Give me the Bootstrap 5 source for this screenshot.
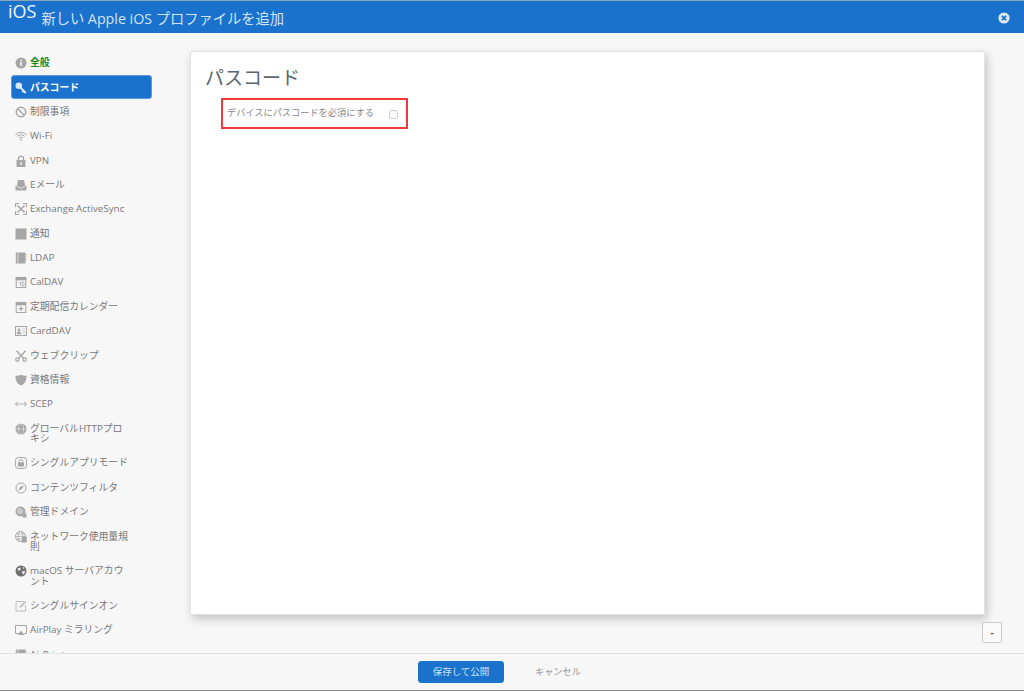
<!DOCTYPE html>
<html lang="ja">
<head>
  <meta charset="UTF-8">
  <meta name="viewport" content="width=device-width, initial-scale=1.0">
  <title>新しい Apple iOS プロファイルを追加</title>
  <link href="https://cdn.jsdelivr.net/npm/bootstrap@5.3.3/dist/css/bootstrap.min.css" rel="stylesheet">
  <style>
    html, body { height: 100%; overflow: hidden; }
    body {
      background: #f7f7f7;
      font-family: "Open Sans", "Noto Sans CJK JP", sans-serif;
      color: #666;
    }
    .page-shell { height: 691px; border-bottom: 1px solid #888; }
    .top-bar {
      height: 33px;
      background: #1b72cc;
      border-top: 1px solid #8fa3b8;
      color: #d3e3f5;
      padding-left: 8px;
      padding-right: 14px;
    }
    .os-name { font-size: 18px; font-weight: 400; line-height: 24px; color: #eef4fb; margin-top: -2px; }
    .sheet-title { font-size: 14.25px; font-weight: 400; line-height: 20px; margin: 8px 0 0 5px; }
    .middle { min-height: 0; }
    .side-col { width: 190px; padding: 18px 0 0 11px; overflow: hidden; }
    .side-item {
      width: 141px;
      padding: 7px 20px 7px 4px;
      font-size: 9.8px;
      line-height: 10.38px;
      color: #777;
      border-radius: 3px;
      gap: 3px;
    }
    .side-item svg { width: 12px; height: 12px; flex: none; margin: -1px 0 -2px; color: #a6a6a6; }
    .side-item.is-ok { color: #1c8a1c; font-weight: 600; }
    .side-item.is-active {
      background: #1b72cc;
      color: #fff;
      font-weight: 600;
      border: 1px solid #5b9ade;
      margin-bottom: 1px;
      padding: 7px 19px 4px 3px;
    }
    .side-item.is-active svg { color: #dbe8f7; }
    .main-col { min-width: 0; padding: 18px 21px 0 0; }
    .sheet-card {
      width: 795px;
      height: 564px;
      background: #fff;
      border: 1px solid #e3e3e3;
      border-radius: 2px;
      box-shadow: 2px 4px 10px rgba(0, 0, 0, .22);
      padding: 13px 14px;
    }
    .sheet-card h1 { font-size: 19px; font-weight: 400; line-height: 27px; color: #5a6570; margin: 0 0 6px; }
    .highlight-box {
      width: 187px;
      height: 31px;
      margin-left: 16px;
      border: 2px solid #f2383a;
      padding: 0 8px 2px 4px;
      font-size: 9.2px;
      color: #888;
    }
    .fake-check {
      width: 9px;
      height: 9px;
      border: 1px solid #d0d0d0;
      border-radius: 2px;
      background: #fafafa;
      margin-top: 3px;
    }
    .mini-btn {
      width: 20px;
      height: 21px;
      margin: 7px 0 0 792px;
      padding: 0;
      font-size: 10px;
      line-height: 17px;
      font-weight: 700;
      color: #555;
      background: #fafafa;
      border: 1px solid #ccc;
      border-radius: 2px;
    }
    .bottom-bar { height: 37px; border-top: 1px solid #e2e2e2; padding: 7px 0 0 418px; gap: 31px; }
    .save-btn {
      width: 86px;
      height: 22px;
      padding: 0;
      font-size: 9.5px;
      line-height: 20px;
      color: #d3e3f5;
      background: #1b72cc;
      border: 1px solid #1b72cc;
      border-radius: 3px;
    }
    .cancel-link { font-size: 9.2px; line-height: 22px; color: #949494; }
    .close-dot { width: 12px; height: 12px; color: #dbe8f8; margin-top: 11px; }
  </style>
</head>
<body>
  <svg width="0" height="0" class="d-block">
    <symbol id="i-info" viewBox="0 0 12 12"><circle cx="6" cy="6" r="5.5" fill="currentColor"/><rect x="5.2" y="5" width="1.6" height="4" fill="#f7f7f7"/><rect x="5.2" y="2.8" width="1.6" height="1.4" fill="#f7f7f7"/></symbol>
    <symbol id="i-key" viewBox="0 0 12 12"><circle cx="3.8" cy="3.8" r="3.3" fill="currentColor"/><path d="M5.5 5.5 10.8 10.8M8.4 8.4 7 9.8M9.8 9.8 8.8 10.8" stroke="currentColor" stroke-width="1.8" fill="none"/></symbol>
    <symbol id="i-block" viewBox="0 0 12 12"><circle cx="6" cy="6" r="4.7" fill="none" stroke="currentColor" stroke-width="1.5"/><path d="M2.8 2.8 9.2 9.2" stroke="currentColor" stroke-width="1.5"/></symbol>
    <symbol id="i-wifi" viewBox="0 0 12 12"><path d="M.5 4.6a7.8 7.8 0 0 1 11 0M2.2 6.4a5.4 5.4 0 0 1 7.6 0M3.9 8.1a3 3 0 0 1 4.2 0" fill="none" stroke="currentColor"/><circle cx="6" cy="9.8" r=".9" fill="currentColor"/></symbol>
    <symbol id="i-lock" viewBox="0 0 12 12"><path d="M3.5 5.5V3.6a2.5 2.5 0 0 1 5 0v1.900" fill="none" stroke="currentColor" stroke-width="1.4"/><path d="M1.500 5h9v7h-9z" fill="currentColor"/><rect x="5.300" y="7" width="1.400" height="3" fill="#f7f7f7"/></symbol>
    <symbol id="i-mail" viewBox="0 0 12 12"><path d="M3 1h6l1 5H2z" fill="currentColor"/><path d="M.5 6h11v5.500H.5z" fill="currentColor"/><path d="M.5 6 6 9.500 11.500 6" fill="none" stroke="#f7f7f7" stroke-width=".8"/></symbol>
    <symbol id="i-sync" viewBox="0 0 12 12"><path d="M.5 4V.5H4M8 .5h3.500V4M11.500 8v3.500H8M4 11.500H.5V8" fill="none" stroke="currentColor" stroke-width="1.200"/><path d="M2.500 2.500 9.500 9.500M9.500 2.500 2.500 9.500" stroke="currentColor" stroke-width="1.500"/></symbol>
    <symbol id="i-square" viewBox="0 0 12 12"><rect x=".5" y=".5" width="11" height="11" fill="currentColor"/></symbol>
    <symbol id="i-book" viewBox="0 0 12 12"><rect x=".8" y=".5" width="9.700" height="11" fill="currentColor"/><path d="M2.800 .5v11" stroke="#f7f7f7" stroke-width=".6"/><path d="M10.500 2.500h1M10.500 5h1M10.500 7.500h1" stroke="currentColor"/></symbol>
    <symbol id="i-cal" viewBox="0 0 12 12"><rect x="1.200" y="1.500" width="9.600" height="10" fill="none" stroke="currentColor"/><path d="M1.200 1.500h9.600v2.500H1.200zM3 .3v1.500M9 .3v1.500" fill="currentColor" stroke="currentColor" stroke-width=".6"/><path d="M3.500 6h2v4M7 6h2v4H7z" fill="none" stroke="currentColor" stroke-width=".7"/></symbol>
    <symbol id="i-calplus" viewBox="0 0 12 12"><rect x="1.200" y="1.500" width="9.600" height="10" fill="none" stroke="currentColor"/><path d="M1.200 1.500h9.600v2.500H1.200zM3 .3v1.500M9 .3v1.500" fill="currentColor" stroke="currentColor" stroke-width=".6"/><path d="M6 5.300v4.600M3.700 7.600h4.600" stroke="currentColor" stroke-width="1.200"/></symbol>
    <symbol id="i-card" viewBox="0 0 12 12"><rect x=".5" y="1.500" width="11" height="9" fill="none" stroke="currentColor"/><circle cx="4" cy="5" r="1.400" fill="currentColor"/><path d="M2 9c0-3 4-3 4 0zM7.300 4h3M7.300 6h3M7.300 8h3" fill="currentColor" stroke="currentColor" stroke-width=".5"/></symbol>
    <symbol id="i-clip" viewBox="0 0 12 12"><circle cx="2.400" cy="9.600" r="1.700" fill="none" stroke="currentColor" stroke-width="1.200"/><circle cx="9.600" cy="9.600" r="1.700" fill="none" stroke="currentColor" stroke-width="1.200"/><path d="M3.600 8.400 10.500 .8M8.400 8.400 1.500 .8" stroke="currentColor" stroke-width="1.400"/></symbol>
    <symbol id="i-shield" viewBox="0 0 12 12"><path d="M.5 1.800C3 1.800 4.600 1.400 6 .8c1.400.6 3 1 5.500 1 0 5-1.500 8-5.500 9.700C2 9.800.5 6.800.5 1.800z" fill="currentColor"/></symbol>
    <symbol id="i-arrows" viewBox="0 0 12 12"><path d="M.5 6h11M3 3.800.5 6 3 8.200M9 3.800 11.500 6 9 8.200" fill="none" stroke="currentColor" stroke-width=".9"/></symbol>
    <symbol id="i-globe" viewBox="0 0 12 12"><circle cx="6" cy="6" r="5.500" fill="currentColor"/><ellipse cx="6" cy="6" rx="2.500" ry="5.500" fill="none" stroke="#f7f7f7" stroke-width=".5"/><path d="M.5 6h11" stroke="#f7f7f7" stroke-width=".5"/></symbol>
    <symbol id="i-applock" viewBox="0 0 12 12"><rect x=".6" y=".6" width="10.800" height="10.800" rx="2.500" fill="none" stroke="currentColor"/><path d="M4.300 5.500V4.300a1.700 1.700 0 0 1 3.400 0v1.200" fill="none" stroke="currentColor"/><rect x="3" y="5.300" width="6" height="4.200" fill="currentColor"/></symbol>
    <symbol id="i-compass" viewBox="0 0 12 12"><circle cx="6" cy="6" r="5" fill="none" stroke="currentColor"/><path d="M8.800 3.200 7 7 3.200 8.800 5 5z" fill="currentColor"/></symbol>
    <symbol id="i-domain" viewBox="0 0 12 12"><circle cx="5.500" cy="5.500" r="5" fill="currentColor"/><circle cx="5" cy="5" r="3.200" fill="#c8c8c8"/><rect x="7.500" y="7.500" width="4" height="4" fill="currentColor"/></symbol>
    <symbol id="i-netuse" viewBox="0 0 12 12"><circle cx="5.500" cy="5.500" r="5" fill="none" stroke="currentColor"/><ellipse cx="5.500" cy="5.500" rx="2.200" ry="5" fill="none" stroke="currentColor" stroke-width=".7"/><path d="M.5 5.500h10M1.200 3h8.600M1.200 8h8.600" stroke="currentColor" stroke-width=".7"/><rect x="7" y="5.500" width="4.800" height="6" fill="currentColor"/></symbol>
    <symbol id="i-earth" viewBox="0 0 12 12"><circle cx="6" cy="6" r="5.500" fill="#707070"/><path d="M2.500 3.500 5 2.500l.8 2-2 1.500zM7.300 6l3 .3-1.500 3-1.500-.5zM7.500 1.800l2 1.500-1.200.7z" fill="#f1f1f1"/></symbol>
    <symbol id="i-edit" viewBox="0 0 12 12"><path d="M9 1.500H1v9.500h9.500V5" fill="none" stroke="currentColor" stroke-opacity=".7"/><path d="M4.500 8 5 6l5-5 1.300 1.300-5 5z" fill="currentColor" fill-opacity=".7"/></symbol>
    <symbol id="i-airplay" viewBox="0 0 12 12"><path d="M3 9.500H.5v-8h11v8H9" fill="none" stroke="currentColor"/><path d="M6 6.500 9.500 11h-7z" fill="currentColor"/></symbol>
    <symbol id="i-close" viewBox="0 0 12 12"><circle cx="6" cy="6" r="5.600" fill="currentColor"/><path d="M3.900 3.900 8.100 8.100M8.100 3.900 3.900 8.100" stroke="#1b72cc" stroke-width="1.800"/></symbol>
  </svg>

  <div class="page-shell d-flex flex-column">
    <header class="top-bar d-flex justify-content-between align-items-start flex-shrink-0">
      <div class="d-flex">
        <span class="os-name">iOS</span>
        <span class="sheet-title">新しい Apple iOS プロファイルを追加</span>
      </div>
      <svg class="close-dot"><use href="#i-close"/></svg>
    </header>

    <div class="middle d-flex flex-grow-1">
      <nav class="side-col flex-shrink-0">
        <div class="side-item is-ok d-flex"><svg><use href="#i-info"/></svg><span>全般</span></div>
        <div class="side-item is-active d-flex"><svg><use href="#i-key"/></svg><span>パスコード</span></div>
        <div class="side-item d-flex"><svg><use href="#i-block"/></svg><span>制限事項</span></div>
        <div class="side-item d-flex"><svg><use href="#i-wifi"/></svg><span>Wi-Fi</span></div>
        <div class="side-item d-flex"><svg><use href="#i-lock"/></svg><span>VPN</span></div>
        <div class="side-item d-flex"><svg><use href="#i-mail"/></svg><span>Eメール</span></div>
        <div class="side-item d-flex"><svg><use href="#i-sync"/></svg><span>Exchange ActiveSync</span></div>
        <div class="side-item d-flex"><svg><use href="#i-square"/></svg><span>通知</span></div>
        <div class="side-item d-flex"><svg><use href="#i-book"/></svg><span>LDAP</span></div>
        <div class="side-item d-flex"><svg><use href="#i-cal"/></svg><span>CalDAV</span></div>
        <div class="side-item d-flex"><svg><use href="#i-calplus"/></svg><span>定期配信カレンダー</span></div>
        <div class="side-item d-flex"><svg><use href="#i-card"/></svg><span>CardDAV</span></div>
        <div class="side-item d-flex"><svg><use href="#i-clip"/></svg><span>ウェブクリップ</span></div>
        <div class="side-item d-flex"><svg><use href="#i-shield"/></svg><span>資格情報</span></div>
        <div class="side-item d-flex"><svg><use href="#i-arrows"/></svg><span>SCEP</span></div>
        <div class="side-item d-flex"><svg><use href="#i-globe"/></svg><span>グローバルHTTPプロキシ</span></div>
        <div class="side-item d-flex"><svg><use href="#i-applock"/></svg><span>シングルアプリモード</span></div>
        <div class="side-item d-flex"><svg><use href="#i-compass"/></svg><span>コンテンツフィルタ</span></div>
        <div class="side-item d-flex"><svg><use href="#i-domain"/></svg><span>管理ドメイン</span></div>
        <div class="side-item d-flex"><svg><use href="#i-netuse"/></svg><span>ネットワーク使用量規則</span></div>
        <div class="side-item d-flex"><svg><use href="#i-earth"/></svg><span>macOS サーバアカウント</span></div>
        <div class="side-item d-flex"><svg><use href="#i-edit"/></svg><span>シングルサインオン</span></div>
        <div class="side-item d-flex"><svg><use href="#i-airplay"/></svg><span>AirPlay ミラリング</span></div>
        <div class="side-item d-flex"><svg><use href="#i-book"/></svg><span>AirPrint</span></div>
      </nav>

      <main class="main-col flex-grow-1">
        <section class="sheet-card">
          <h1>パスコード</h1>
          <label class="highlight-box d-flex justify-content-between align-items-center">
            <span>デバイスにパスコードを必須にする</span>
            <span class="fake-check"></span>
          </label>
        </section>
        <button type="button" class="btn mini-btn d-block">-</button>
      </main>
    </div>

    <footer class="bottom-bar d-flex flex-shrink-0">
      <button type="button" class="btn save-btn">保存して公開</button>
      <span class="cancel-link">キャンセル</span>
    </footer>
  </div>

  <script src="https://cdn.jsdelivr.net/npm/bootstrap@5.3.3/dist/js/bootstrap.bundle.min.js"></script>
</body>
</html>
